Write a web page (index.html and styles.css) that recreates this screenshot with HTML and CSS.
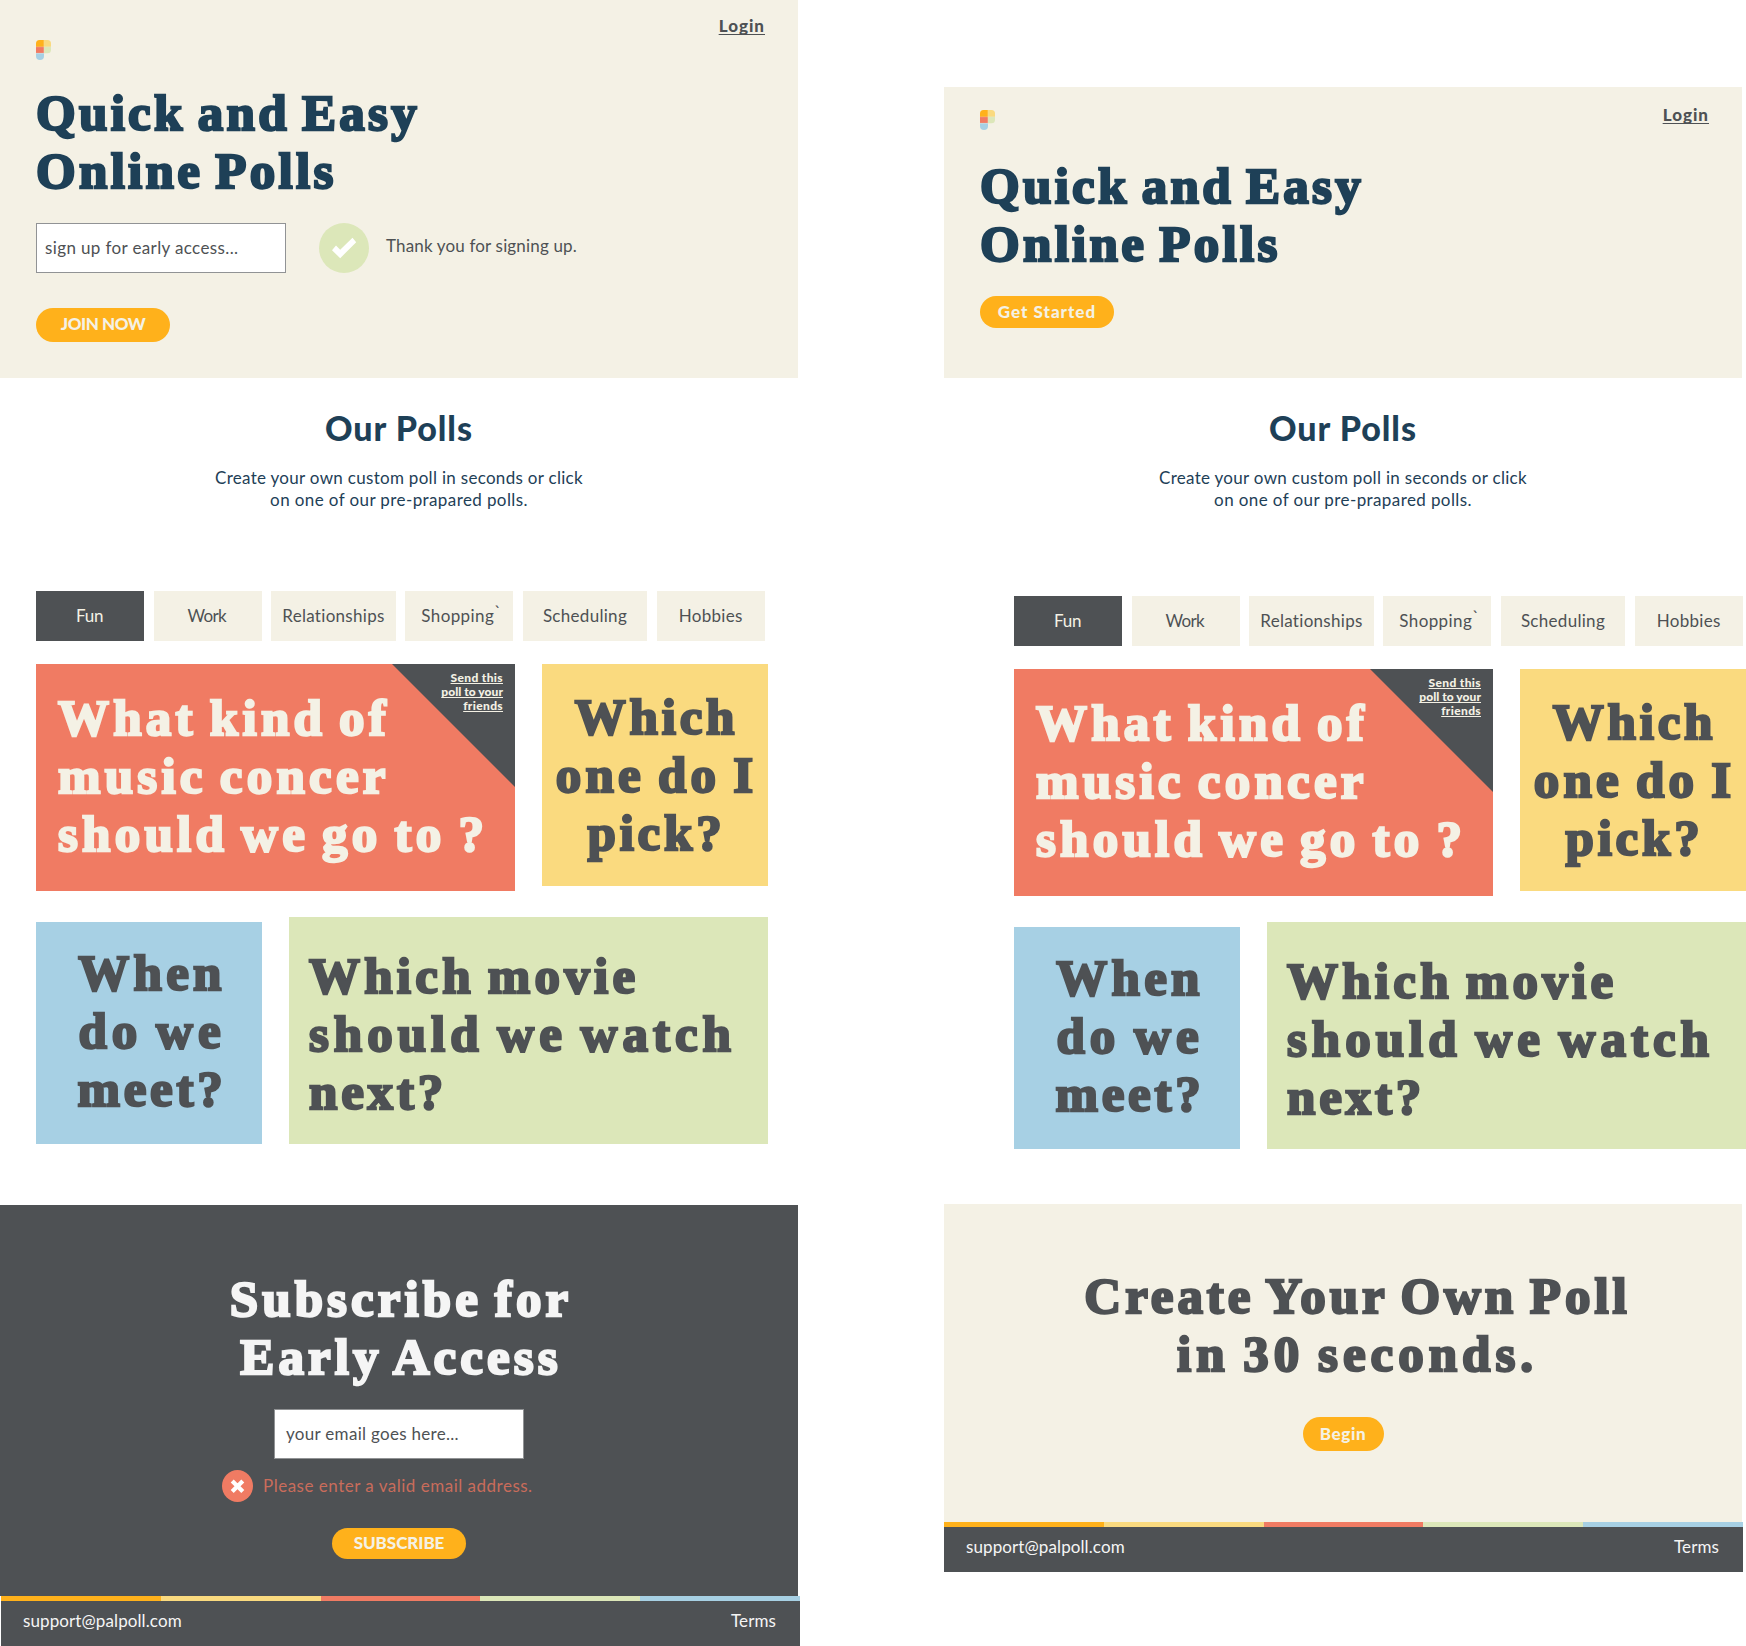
FILE: index.html
```
<!DOCTYPE html>
<html lang="en">
<head>
<meta charset="utf-8">
<title>PalPoll – Quick and Easy Online Polls</title>
<link rel="stylesheet" href="styles.css">
</head>
<body>
<svg class="defs" aria-hidden="true">
  <symbol id="logo" viewBox="0 0 15 20">
    <path fill="#ffb11b" d="M0 7V3.5A3.5 3.5 0 0 1 3.5 0H8V7Z"/>
    <path fill="#fada7f" d="M8 0h3.5A3.5 3.5 0 0 1 15 3.5V7H8Z"/>
    <path fill="#f07b63" d="M0 6.8H8V13.2H0Z"/>
    <path fill="#dce7b9" d="M8 6.8H15V9.7A3.5 3.5 0 0 1 11.5 13.2H8Z"/>
    <path fill="#a7d0e4" d="M0 13.2H8V16A4 4 0 0 1 0 16Z"/>
    <path stroke="#f4f1e5" stroke-opacity=".4" stroke-width=".6" fill="none" d="M0 6.8H15M0 13.2H8M7.7 0V13.2"/>
  </symbol>
</svg>

<div class="frame early">
  <header class="hero">
    <div class="bar">
      <svg class="logo"><use href="#logo"/></svg>
      <a class="login">Login</a>
    </div>
    <h1 class="display navy"><span>Quick and Easy</span><span>Online Polls</span></h1>
    <div class="signup">
      <div class="field"><span>sign up for early access...</span></div>
      <svg class="ok" viewBox="0 0 50 50"><circle cx="25" cy="25" r="25" fill="#dce7b9"/><path fill="#fff" d="M13 27.2 17 22.5 21.2 26.8 33.5 14.8 37.2 19.2 21.2 35.2Z"/></svg>
      <p class="thanks">Thank you for signing up.</p>
    </div>
    <a class="btn join">JOIN NOW</a>
  </header>

  <section class="polls">
    <h2>Our Polls</h2>
    <p class="lead"><span>Create your own custom poll in seconds or click</span><span class="wide">on one of our pre-prapared polls.</span></p>
    <nav class="tabs">
      <a class="on">Fun</a><a class="tight">Work</a><a class="long">Relationships</a><a class="shop">Shopping<i>`</i></a><a class="long">Scheduling</a><a>Hobbies</a>
    </nav>
    <div class="row">
      <article class="card big red">
        <svg class="corner" viewBox="0 0 123 123"><path fill="#4e5154" d="M0 0H123V123Z"/></svg>
        <a class="send"><span>Send this</span><span class="snug">poll to your</span><span>friends</span></a>
        <h3 class="display"><span>What kind of</span><span>music concer</span><span>should we go to ?</span></h3>
      </article>
      <article class="card small yellow"><h3 class="display"><span class="snug">Which</span><span>one do I</span><span class="snug">pick?</span></h3></article>
    </div>
    <div class="row low">
      <article class="card small blue"><h3 class="display"><span>When</span><span class="wide">do we</span><span class="snug">meet?</span></h3></article>
      <article class="card big green"><h3 class="display"><span>Which movie</span><span class="wide">should we watch</span><span class="snug">next?</span></h3></article>
    </div>
  </section>

  <section class="subscribe">
    <h2 class="display"><span>Subscribe for</span><span>Early Access</span></h2>
    <div class="field"><span>your email goes here...</span></div>
    <div class="error">
      <svg viewBox="0 0 31 32"><ellipse cx="15.5" cy="16" rx="15.5" ry="16" fill="#f07b63"/><path d="M10.2 11 20.8 21.6M20.8 11 10.2 21.6" stroke="#fff" stroke-width="4.2"/></svg>
      <p>Please enter a valid email address.</p>
    </div>
    <a class="btn sub">SUBSCRIBE</a>
  </section>
  <footer>
    <div class="stripe"><i></i><i></i><i></i><i></i><i></i></div>
    <div class="foot"><a>support@palpoll.com</a><a>Terms</a></div>
  </footer>
</div>

<div class="frame launch">
  <header class="hero">
    <div class="bar">
      <svg class="logo"><use href="#logo"/></svg>
      <a class="login">Login</a>
    </div>
    <h1 class="display navy"><span>Quick and Easy</span><span>Online Polls</span></h1>
    <a class="btn start">Get Started</a>
  </header>

  <section class="polls">
    <h2>Our Polls</h2>
    <p class="lead"><span>Create your own custom poll in seconds or click</span><span class="wide">on one of our pre-prapared polls.</span></p>
    <nav class="tabs">
      <a class="on">Fun</a><a class="tight">Work</a><a class="long">Relationships</a><a class="shop">Shopping<i>`</i></a><a class="long">Scheduling</a><a>Hobbies</a>
    </nav>
    <div class="row">
      <article class="card big red">
        <svg class="corner" viewBox="0 0 123 123"><path fill="#4e5154" d="M0 0H123V123Z"/></svg>
        <a class="send"><span>Send this</span><span class="snug">poll to your</span><span>friends</span></a>
        <h3 class="display"><span>What kind of</span><span>music concer</span><span>should we go to ?</span></h3>
      </article>
      <article class="card small yellow"><h3 class="display"><span class="snug">Which</span><span>one do I</span><span class="snug">pick?</span></h3></article>
    </div>
    <div class="row low">
      <article class="card small blue"><h3 class="display"><span>When</span><span class="wide">do we</span><span class="snug">meet?</span></h3></article>
      <article class="card big green"><h3 class="display"><span>Which movie</span><span class="wide">should we watch</span><span class="snug">next?</span></h3></article>
    </div>
  </section>

  <section class="create">
    <h2 class="display"><span class="snug">Create Your Own Poll</span><span class="wide">in 30 seconds.</span></h2>
    <a class="btn begin">Begin</a>
  </section>
  <footer>
    <div class="stripe"><i></i><i></i><i></i><i></i><i></i></div>
    <div class="foot"><a>support@palpoll.com</a><a>Terms</a></div>
  </footer>
</div>
</body>
</html>
```
FILE: styles.css
```
* { box-sizing: border-box; margin: 0; padding: 0; }

body {
  display: flex;
  width: 1746px;
  height: 1646px;
  overflow: hidden;
  background: #fff;
  color: #4e5154;
  font: 17px/22px Lato, "Liberation Sans", sans-serif;
  letter-spacing: .3px;
}

.defs { position: absolute; width: 0; height: 0; }
svg { display: block; flex: none; }
h1 span, h2 span, h3 span, .lead span, .send span { display: block; }

.frame { flex: none; height: 1646px; }
.early { width: 800px; }
.launch { width: 802px; margin-left: 144px; padding-top: 87px; overflow: hidden; }

/* Display headings */
.display {
  font: bold 51px/58px "Liberation Serif", serif;
  letter-spacing: 4.25px;
  word-spacing: -4px;
  -webkit-text-stroke: 2.4px currentColor;
  paint-order: stroke fill;
}
.display .snug { letter-spacing: 3.8px; }
.display .wide { letter-spacing: 5px; }
.navy { color: #1e4057; letter-spacing: 3.3px; }

/* Hero */
.hero { width: 798px; height: 378px; padding: 0 33px 0 36px; background: #f4f1e5; }
.bar { display: flex; justify-content: space-between; height: 84px; }
.logo { width: 15px; height: 20px; margin-top: 40px; }
.login {
  height: 22px;
  margin-top: 15px;
  font-weight: 900;
  letter-spacing: 1px;
  text-decoration: underline;
  text-decoration-skip-ink: none;
  text-decoration-thickness: 1px;
  text-underline-offset: 2px;
}
.signup { display: flex; height: 50px; margin-top: 23px; }
.field {
  display: flex;
  align-items: center;
  width: 250px;
  height: 50px;
  padding-left: 8px;
  border: 1px solid #919395;
  background: #fff;
}
.signup .field { letter-spacing: .37px; }
.ok { width: 50px; height: 50px; margin-left: 33px; }
.thanks { margin: 12px 0 0 17px; letter-spacing: .16px; }

.btn {
  display: flex;
  align-items: center;
  justify-content: center;
  width: 134px;
  height: 34px;
  border-radius: 17px;
  background: #ffb11b;
  color: #f4f1e5;
  font-weight: 900;
  letter-spacing: -.05px;
}
.join { margin-top: 35px; padding-bottom: 2px; letter-spacing: -.45px; }

.launch .hero { height: 291px; }
.launch .bar { height: 70px; }
.launch .logo { margin-top: 23px; }
.launch .login { margin-top: 17px; }
.start { height: 32px; margin-top: 23px; letter-spacing: 1px; }

/* Polls */
.polls { padding: 30px 0 0; }
.polls h2 {
  width: 798px;
  color: #1e4057;
  font-size: 34px;
  font-weight: 900;
  line-height: 40px;
  letter-spacing: .95px;
  text-align: center;
}
.lead { width: 798px; margin-top: 19px; color: #1e4057; text-align: center; }
.lead .wide { letter-spacing: .4px; }

.tabs { display: flex; gap: 9.3px; height: 50px; margin: 80px 0 0 36px; }
.tabs a {
  display: flex;
  flex: none;
  align-items: center;
  justify-content: center;
  width: 108.3px;
  background: #f4f1e5;
}
.tabs .long { width: 124.6px; letter-spacing: .3px; }
.tabs .on { padding-right: 1px; background: #4e5154; color: #f4f1e5; letter-spacing: -.2px; }
.tabs .tight { padding-right: 2px; letter-spacing: -.7px; }
.tabs .shop { letter-spacing: .4px; }
.tabs i { width: 3px; font-size: 17px; font-style: normal; transform: translateY(-4px); }

.row { display: flex; gap: 27px; margin: 23px 0 0 36px; }
.row.low { margin-top: 26px; }
.card { position: relative; flex: none; }
.big { width: 479px; height: 227px; }
.small { width: 226px; height: 222px; text-align: center; }
.red { padding: 25px 0 0 22px; background: #f07b63; color: #f4f1e5; }
.yellow { padding: 24px 0 0 3px; background: #fada7f; }
.blue { margin-top: 5px; padding: 22px 0 0 6px; background: #a7d0e4; }
.green { padding: 30px 0 0 20px; background: #dce7b9; }
.corner { position: absolute; top: 0; right: 0; width: 123px; height: 123px; }
.send {
  position: absolute;
  top: 7px;
  right: 12px;
  font: 900 12px/14px Lato, sans-serif;
  letter-spacing: .35px;
  text-align: right;
  text-decoration: underline;
  text-decoration-skip-ink: none;
  text-decoration-thickness: 1px;
  text-underline-offset: 1px;
}
.send .snug { letter-spacing: .05px; }

.launch .tabs { margin: 85px 0 0 70px; }
.launch .row { margin-left: 70px; }

/* Early access sign-up */
.subscribe {
  display: flex;
  flex-direction: column;
  align-items: center;
  width: 798px;
  height: 391px;
  margin-top: 61px;
  padding-top: 65px;
  background: #4e5154;
}
.subscribe .display { padding-left: 4px; color: #f5f5f5; letter-spacing: 4.1px; text-align: center; }
.subscribe .field { margin-top: 23px; padding-left: 11px; }
.error { display: flex; align-items: center; align-self: flex-start; gap: 10px; margin: 11px 0 0 222px; }
.error svg { width: 31px; height: 32px; }
.error p { color: #c96c5b; letter-spacing: .5px; }
.sub { height: 31px; margin-top: 26px; padding-bottom: 1px; }

/* Create your own */
.create {
  display: flex;
  flex-direction: column;
  align-items: center;
  width: 798px;
  height: 318px;
  margin-top: 55px;
  padding-top: 63px;
  background: #f4f1e5;
}
.create .display { padding-left: 29px; text-align: center; }
.create .snug { letter-spacing: 3.95px; }
.begin { width: 81px; margin-top: 34px; letter-spacing: .6px; }

/* Footer */
footer { width: 799px; background: #4e5154; color: #f5f5f5; }
.early footer { margin-left: 1px; }
.stripe { display: grid; grid-template-columns: repeat(5, 1fr); height: 5px; }
.stripe i:nth-child(1) { background: #ffb11b; }
.stripe i:nth-child(2) { background: #fada7f; }
.stripe i:nth-child(3) { background: #f07b63; }
.stripe i:nth-child(4) { background: #dce7b9; }
.stripe i:nth-child(5) { background: #a7d0e4; }
.foot { display: flex; justify-content: space-between; height: 45px; padding: 9px 24px 0 22px; letter-spacing: .1px; }
```
